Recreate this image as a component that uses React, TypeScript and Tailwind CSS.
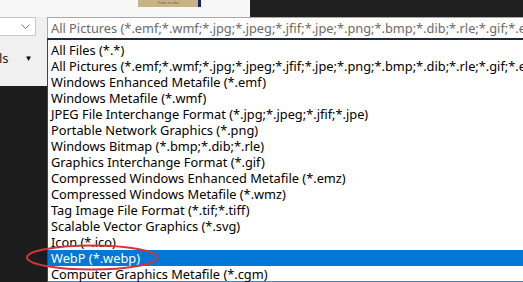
import React from 'react'

const items = [
	'All Files (*.*)',
	'All Pictures (*.emf;*.wmf;*.jpg;*.jpeg;*.jfif;*.jpe;*.png;*.bmp;*.dib;*.rle;*.gif;*.emz;*.wmz;*.tif;*.tiff;*.svg;*.ico;*.webp)',
	'Windows Enhanced Metafile (*.emf)',
	'Windows Metafile (*.wmf)',
	'JPEG File Interchange Format (*.jpg;*.jpeg;*.jfif;*.jpe)',
	'Portable Network Graphics (*.png)',
	'Windows Bitmap (*.bmp;*.dib;*.rle)',
	'Graphics Interchange Format (*.gif)',
	'Compressed Windows Enhanced Metafile (*.emz)',
	'Compressed Windows Metafile (*.wmz)',
	'Tag Image File Format (*.tif;*.tiff)',
	'Scalable Vector Graphics (*.svg)',
	'Icon (*.ico)',
	'WebP (*.webp)',
	'Computer Graphics Metafile (*.cgm)',
]

const SELECTED = 'WebP (*.webp)'

export default function App() {
	return (
		<div
			className="relative w-[523px] h-[282px] overflow-hidden bg-[#1c1c1c] text-[12.8px] leading-[16px]"
			style={{ fontFamily: '"Segoe UI", "Noto Sans", sans-serif' }}
		>
			{/* top strip */}
			<div className="flex h-[17px]">
				<div className="w-[250px] bg-[#f7f7f7] flex">
					<div className="ml-[138px] w-[63px] h-[7px] bg-[#c8b288] border-r-[3px] border-[#1d2550] flex justify-center items-start overflow-hidden">
						<span className="text-[4px] leading-[5px] text-[#6b5a3c]">Todo tu dia</span>
					</div>
				</div>
				<div className="flex-1 bg-[#202020]" />
			</div>

			<div className="flex">
				{/* left panel */}
				<div className="w-[47px] shrink-0 flex flex-col">
					<div className="h-[69px] bg-[#f0f0f0] flex flex-col">
						<div className="h-[19px] w-[36px] bg-white border border-[#c8c8c8] border-l-0 flex items-center justify-end pr-[5px]">
							<svg width="9" height="6" viewBox="0 0 9 6">
								<path d="M0.5 0.5 L4.5 4.5 L8.5 0.5" fill="none" stroke="#777" strokeWidth="1" />
							</svg>
						</div>
						<div className="mt-[14px] flex items-center">
							<span className="text-[13px] text-[#222] -ml-[1px]">ls</span>
							<span className="ml-[16px] text-[8px] text-black">▼</span>
						</div>
					</div>
				</div>

				{/* filter combo + list */}
				<div className="flex-1 min-w-0 flex flex-col">
					<div className="h-[21px] bg-white border-t border-l border-[#7fb4e0] flex items-center pl-[3px] whitespace-nowrap overflow-hidden">
						<span className="text-[#6a6a6a]">
							All Pictures (*.emf;*.wmf;*.jpg;*.jpeg;*.jfif;*.jpe;*.png;*.bmp;*.dib;*.rle;*.gif;*.emz;*.wmz;*.tif;*.tiff)
						</span>
					</div>
					<div className="h-[245px] bg-white border-t-2 border-l border-b-2 border-t-[#1b2a3c] border-l-[#2a4a6a] border-b-[#3b86cf] pt-[2px]">
						{items.map((it) => (
							<div
								key={it}
								className={
									it === SELECTED
										? 'h-[16px] pl-[3px] bg-[#0078d7] text-white whitespace-nowrap overflow-hidden'
										: 'h-[16px] pl-[3px] text-black whitespace-nowrap overflow-hidden'
								}
							>
								{it}
							</div>
						))}
					</div>
				</div>
			</div>

			{/* red annotation circle */}
			<svg className="absolute left-[24px] top-[243px]" width="136" height="30" viewBox="0 0 136 30">
				<ellipse cx="68" cy="14.5" rx="65" ry="12" fill="none" stroke="#d2343c" strokeWidth="2" />
			</svg>
		</div>
	)
}
